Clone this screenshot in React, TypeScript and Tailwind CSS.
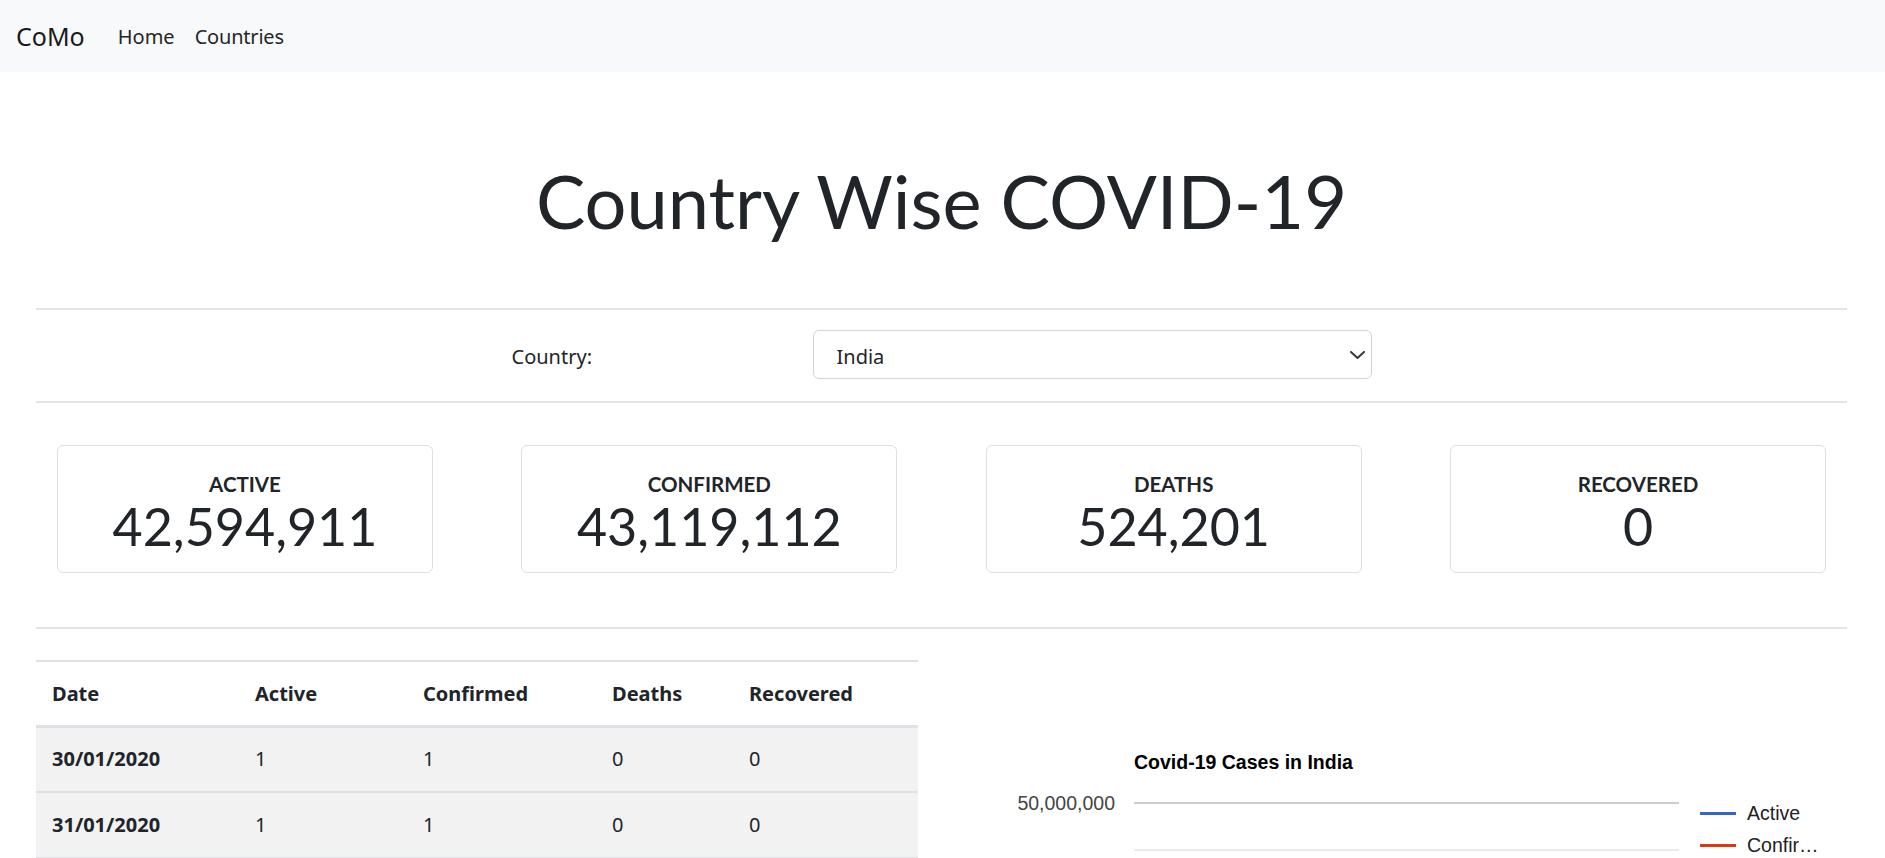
import React from "react";

const sans = "font-['Noto_Sans','Open_Sans',sans-serif]";
const lato = "font-['Lato','Noto_Sans',sans-serif]";

const stats = [
  { label: "ACTIVE", value: "42,594,911" },
  { label: "CONFIRMED", value: "43,119,112" },
  { label: "DEATHS", value: "524,201" },
  { label: "RECOVERED", value: "0" },
];

const rows = [
  ["30/01/2020", "1", "1", "0", "0"],
  ["31/01/2020", "1", "1", "0", "0"],
  ["01/02/2020", "1", "1", "0", "0"],
  ["02/02/2020", "2", "2", "0", "0"],
  ["03/02/2020", "3", "3", "0", "0"],
];

function Divider() {
  return <div className="h-[2px] bg-[#e4e4e4]" />;
}

function Chart() {
  return (
    <svg width="906" height="420" className="block" style={{ fontFamily: "'Liberation Sans', Arial, sans-serif" }}>
      <text x="193" y="109" fontSize="19.5" fontWeight="bold" fill="#000">
        Covid-19 Cases in India
      </text>
      <text x="174" y="150" fontSize="19.5" fill="#444" textAnchor="end">
        50,000,000
      </text>
      <rect x="193" y="142" width="545" height="2" fill="#cccccc" />
      <rect x="193" y="189" width="545" height="2" fill="#ebebeb" />
      <rect x="759" y="152" width="36" height="3" fill="#3366cc" />
      <text x="806" y="160" fontSize="19.5" fill="#222">
        Active
      </text>
      <rect x="759" y="184" width="36" height="3" fill="#dc3912" />
      <text x="806" y="192" fontSize="19.5" fill="#222">
        Confir…
      </text>
    </svg>
  );
}

export default function App() {
  return (
    <div className={`min-h-screen bg-white text-[#212529] ${sans}`}>
      <nav className="h-[72px] bg-[#f8f9fa] flex items-center pl-[16px] pt-[2px]">
        <span className="text-[25px] text-[#1a1a1a]">CoMo</span>
        <a className="ml-[33px] text-[20px] text-[#262626]">Home</a>
        <a className="ml-[20px] text-[20px] text-[#262626] tracking-[-0.2px]">Countries</a>
      </nav>

      <main className="pl-[36px] pr-[38px]">
        <h1 className={`${lato} text-center text-[74px] leading-[94px] mt-[82px] font-normal text-[#212529]`}>
          Country Wise COVID-19
        </h1>

        <div className="mt-[60px]">
          <Divider />
        </div>

        <div className="flex justify-center items-center pt-[20px] pb-[22px]">
          <div className="w-[301px] text-[20px] mt-[5px]">Country:</div>
          <div className="relative w-[559px]">
            <select
              defaultValue="India"
              className={`${sans} appearance-none w-full h-[49px] border border-[#ced4da] rounded-[6px] pl-[23px] pt-[4px] text-[20px] text-[#212529] bg-white outline-none`}
            >
              <option>India</option>
              <option>United States</option>
              <option>Brazil</option>
            </select>
            <svg
              width="15"
              height="8"
              viewBox="0 0 15 8"
              className="absolute right-[7px] top-[21px] pointer-events-none"
            >
              <path d="M1 1 L7.5 7 L14 1" stroke="#343a40" strokeWidth="2" fill="none" strokeLinecap="round" strokeLinejoin="round" />
            </svg>
          </div>
        </div>

        <Divider />

        <div className="flex justify-between px-[21px] pt-[42px] pb-[54px]">
          {stats.map((s) => (
            <div
              key={s.label}
              className={`${lato} w-[376px] h-[128px] border border-[#dfdfdf] rounded-[6px] flex flex-col items-center pt-[23px]`}
            >
              <div className="text-[20.5px] leading-[30px] font-bold text-[#212529]">{s.label}</div>
              <div className="text-[52px] leading-[54px] font-normal text-[#212529]">{s.value}</div>
            </div>
          ))}
        </div>

        <Divider />

        <div className="flex items-start pt-[31px]">
          <div className="w-[905px] pr-[23px]">
            <table className="w-full border-collapse text-[20px]">
              <thead>
                <tr className="h-[65px] border-t-2 border-b-[3px] border-[#dee2e6] bg-white">
                  <th className="w-[203px] pl-[16px] pb-[16px] align-bottom text-left font-bold">Date</th>
                  <th className="w-[168px] pl-[16px] pb-[16px] align-bottom text-left font-bold">Active</th>
                  <th className="w-[189px] pl-[16px] pb-[16px] align-bottom text-left font-bold">Confirmed</th>
                  <th className="w-[137px] pl-[16px] pb-[16px] align-bottom text-left font-bold">Deaths</th>
                  <th className="pl-[16px] pb-[16px] align-bottom text-left font-bold">Recovered</th>
                </tr>
              </thead>
              <tbody>
                {rows.map((r) => (
                  <tr key={r[0]} className="h-[66px] bg-[#f2f2f2] border-b-2 border-[#dee2e6]">
                    <td className="pl-[16px] font-bold">{r[0]}</td>
                    <td className="pl-[16px]">{r[1]}</td>
                    <td className="pl-[16px]">{r[2]}</td>
                    <td className="pl-[16px]">{r[3]}</td>
                    <td className="pl-[16px]">{r[4]}</td>
                  </tr>
                ))}
              </tbody>
            </table>
          </div>
          <div className="flex-1">
            <Chart />
          </div>
        </div>
      </main>
    </div>
  );
}
